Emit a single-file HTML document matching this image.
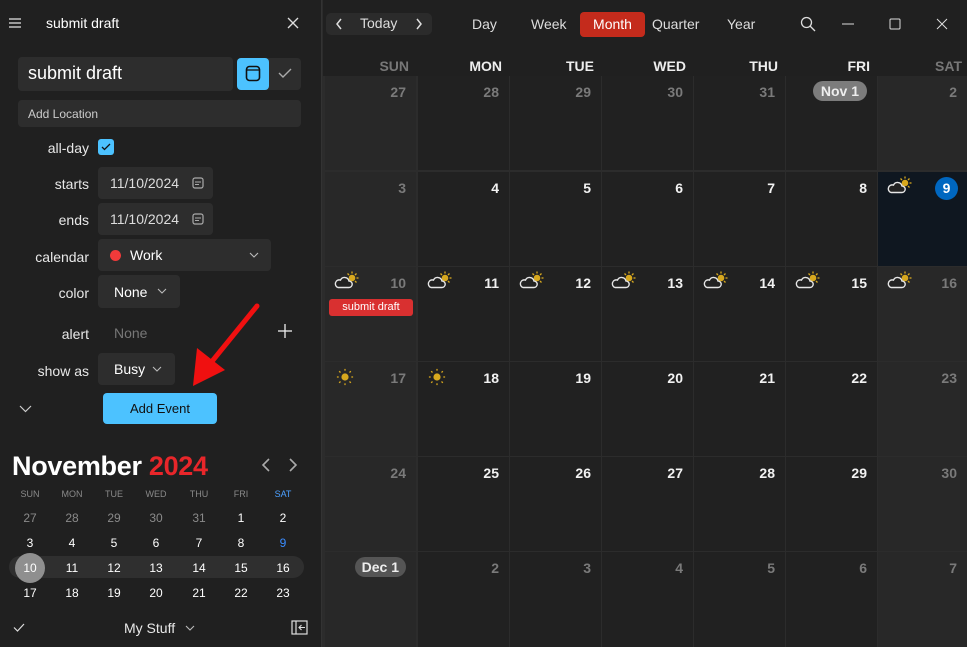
<!DOCTYPE html>
<html><head><meta charset="utf-8"><style>
*{box-sizing:border-box;margin:0;padding:0}
body{width:967px;height:647px;overflow:hidden;background:#2c2c2c;font-family:"Liberation Sans",sans-serif;color:#fff;position:relative}
.a{position:absolute}
#side{left:0;top:0;width:322px;height:647px;background:#202020;border-right:1px solid #333}
.box{position:absolute;background:#2d2d2d;border-radius:4px}
.lbl{position:absolute;width:89px;text-align:right;font-size:14px;color:#e8e8e8}
.mc{position:absolute;width:30px;text-align:center;font-size:12px;color:#fff}
.g{color:#8a8a8a}
.c{position:absolute;width:91px;height:94px;background:#212121}
.w{background:#282828}
.n{position:absolute;right:10px;top:8px;font-size:14px;font-weight:bold;color:#f2f2f2}
.w .n,.o .n{color:#7a7a7a}
.hd{position:absolute;top:58px;font-size:14px;font-weight:bold;text-align:right;width:84px;color:#eee}
.ic{position:absolute;left:9px;top:4px;width:26px;height:20px}
.tb{position:absolute;top:16px;font-size:14px;color:#ddd}
</style></head><body>
<svg width="0" height="0" style="position:absolute"><defs>
<symbol id="cs" viewBox="0 0 26 20"><g stroke="#d7a81e" stroke-width="1.3"><line x1="18" y1="0.5" x2="18" y2="2.5"/><line x1="24.5" y1="7" x2="22.5" y2="7"/><line x1="22.5" y1="2.5" x2="21" y2="4"/><line x1="13.5" y1="2.5" x2="15" y2="4"/><line x1="22.5" y1="11.5" x2="21" y2="10"/></g><circle cx="18" cy="7" r="3.3" fill="#d7a81e"/><path d="M4 16.5h11a3.2 3.2 0 0 0 0-6.4 4.5 4.5 0 0 0-8.5-1A3.8 3.8 0 0 0 4 16.5z" fill="#222" stroke="#e6e6e6" stroke-width="1.4"/></symbol>
<symbol id="sun" viewBox="0 0 20 20"><circle cx="10" cy="10" r="4" fill="#d7a81e"/><g stroke="#d7a81e" stroke-width="1.4"><line x1="10" y1="1" x2="10" y2="3"/><line x1="10" y1="17" x2="10" y2="19"/><line x1="1" y1="10" x2="3" y2="10"/><line x1="17" y1="10" x2="19" y2="10"/><line x1="3.5" y1="3.5" x2="5" y2="5"/><line x1="15" y1="15" x2="16.5" y2="16.5"/><line x1="3.5" y1="16.5" x2="5" y2="15"/><line x1="15" y1="5" x2="16.5" y2="3.5"/></g></symbol>
</defs></svg>

<div id="side" class="a">
 <svg class="a" style="left:8px;top:16px" width="14" height="14"><g stroke="#ddd" stroke-width="1.3"><line x1="1" y1="3" x2="13" y2="3"/><line x1="1" y1="7" x2="13" y2="7"/><line x1="1" y1="11" x2="13" y2="11"/></g></svg>
 <div class="a" style="left:46px;top:15px;font-size:14px">submit draft</div>
 <svg class="a" style="left:287px;top:17px" width="12" height="12"><g stroke="#ddd" stroke-width="1.3"><line x1="1" y1="1" x2="11" y2="11"/><line x1="11" y1="1" x2="1" y2="11"/></g></svg>
 <div class="box" style="left:18px;top:57px;width:215px;height:34px"></div>
 <div class="a" style="left:28px;top:63px;font-size:18px">submit draft</div>
 <div class="box" style="left:237px;top:58px;width:64px;height:32px"></div>
 <div class="a" style="left:237px;top:58px;width:32px;height:32px;background:#4cc2ff;border-radius:4px"></div>
 <svg class="a" style="left:245px;top:65px" width="16" height="17"><rect x="1.5" y="1.5" width="13" height="14" rx="3" fill="none" stroke="#111" stroke-width="1.6"/><line x1="2" y1="5" x2="14" y2="5" stroke="#111" stroke-width="1.3"/></svg>
 <svg class="a" style="left:278px;top:67px" width="14" height="12"><path d="M1 6l4 4 8-8" fill="none" stroke="#aaa" stroke-width="1.4"/></svg>
 <div class="box" style="left:18px;top:100px;width:283px;height:27px"></div>
 <div class="a" style="left:28px;top:107px;font-size:12px;color:#ccc">Add Location</div>
 <div class="lbl" style="left:0;top:140px">all-day</div>
 <div class="a" style="left:98px;top:139px;width:16px;height:16px;background:#4cc2ff;border-radius:3px"></div>
 <svg class="a" style="left:101px;top:143px" width="10" height="8"><path d="M1 4l2.5 2.5L9 1" fill="none" stroke="#111" stroke-width="1.3"/></svg>
 <div class="lbl" style="left:0;top:176px">starts</div>
 <div class="box" style="left:98px;top:167px;width:115px;height:32px"></div>
 <div class="a" style="left:110px;top:175px;font-size:14px;color:#ddd">11/10/2024</div>
 <svg class="a" style="left:192px;top:177px" width="12" height="12"><rect x="1" y="1" width="10" height="10" rx="2" fill="none" stroke="#aaa" stroke-width="1.2"/><line x1="3" y1="5" x2="9" y2="5" stroke="#aaa"/><line x1="3" y1="7.5" x2="7" y2="7.5" stroke="#aaa"/></svg>
 <div class="lbl" style="left:0;top:212px">ends</div>
 <div class="box" style="left:98px;top:203px;width:115px;height:32px"></div>
 <div class="a" style="left:110px;top:211px;font-size:14px;color:#ddd">11/10/2024</div>
 <svg class="a" style="left:192px;top:213px" width="12" height="12"><rect x="1" y="1" width="10" height="10" rx="2" fill="none" stroke="#aaa" stroke-width="1.2"/><line x1="3" y1="5" x2="9" y2="5" stroke="#aaa"/><line x1="3" y1="7.5" x2="7" y2="7.5" stroke="#aaa"/></svg>
 <div class="lbl" style="left:0;top:249px">calendar</div>
 <div class="box" style="left:98px;top:239px;width:173px;height:32px"></div>
 <div class="a" style="left:110px;top:250px;width:11px;height:11px;border-radius:50%;background:#f03a3a"></div>
 <div class="a" style="left:130px;top:247px;font-size:14px">Work</div>
 <svg class="a" style="left:249px;top:252px" width="10" height="6"><path d="M1 1l4 4 4-4" fill="none" stroke="#bbb" stroke-width="1.1"/></svg>
 <div class="lbl" style="left:0;top:285px">color</div>
 <div class="box" style="left:98px;top:275px;width:82px;height:33px"></div>
 <div class="a" style="left:114px;top:284px;font-size:14px">None</div>
 <svg class="a" style="left:157px;top:288px" width="10" height="6"><path d="M1 1l4 4 4-4" fill="none" stroke="#bbb" stroke-width="1.1"/></svg>
 <div class="lbl" style="left:0;top:326px">alert</div>
 <div class="a" style="left:114px;top:325px;font-size:14px;color:#777">None</div>
 <svg class="a" style="left:278px;top:324px" width="14" height="14"><g stroke="#eee" stroke-width="1.3"><line x1="7" y1="0" x2="7" y2="14"/><line x1="0" y1="7" x2="14" y2="7"/></g></svg>
 <div class="lbl" style="left:0;top:363px">show as</div>
 <div class="box" style="left:98px;top:353px;width:77px;height:32px"></div>
 <div class="a" style="left:114px;top:361px;font-size:14px">Busy</div>
 <svg class="a" style="left:152px;top:366px" width="10" height="6"><path d="M1 1l4 4 4-4" fill="none" stroke="#bbb" stroke-width="1.1"/></svg>
 <svg class="a" style="left:19px;top:405px" width="13" height="8"><path d="M1 1l5.5 5.5L12 1" fill="none" stroke="#ccc" stroke-width="1.2"/></svg>
 <div class="a" style="left:103px;top:393px;width:114px;height:31px;background:#4cc2ff;border-radius:4px;color:#111;font-size:13px;text-align:center;line-height:31px">Add Event</div>
 <svg class="a" style="left:185px;top:300px" width="80" height="95"><line x1="72" y1="6" x2="20" y2="70" stroke="#f01010" stroke-width="5" stroke-linecap="round"/><polygon points="8,86 12,48 40,70" fill="#f01010"/></svg>

 <div class="a" style="left:12px;top:451px;font-size:27px;font-weight:bold;letter-spacing:-0.3px">November <span style="color:#e8262a">2024</span></div>
 <svg class="a" style="left:260px;top:458px" width="40" height="14"><path d="M9 1L3 7l6 6" fill="none" stroke="#aaa" stroke-width="1.6"/><path d="M30 1l6 6-6 6" fill="none" stroke="#aaa" stroke-width="1.6"/></svg>
 <div class="mc g" style="left:15px;top:489px;font-size:9px">SUN</div><div class="mc g" style="left:57px;top:489px;font-size:9px">MON</div><div class="mc g" style="left:99px;top:489px;font-size:9px">TUE</div><div class="mc g" style="left:141px;top:489px;font-size:9px">WED</div><div class="mc g" style="left:184px;top:489px;font-size:9px">THU</div><div class="mc g" style="left:226px;top:489px;font-size:9px">FRI</div><div class="mc" style="left:268px;top:489px;font-size:9px;color:#4ca0ff">SAT</div>
 <div class="mc g" style="left:15px;top:511px">27</div><div class="mc g" style="left:57px;top:511px">28</div><div class="mc g" style="left:99px;top:511px">29</div><div class="mc g" style="left:141px;top:511px">30</div><div class="mc g" style="left:184px;top:511px">31</div><div class="mc" style="left:226px;top:511px">1</div><div class="mc" style="left:268px;top:511px">2</div>
 <div class="mc" style="left:15px;top:536px">3</div><div class="mc" style="left:57px;top:536px">4</div><div class="mc" style="left:99px;top:536px">5</div><div class="mc" style="left:141px;top:536px">6</div><div class="mc" style="left:184px;top:536px">7</div><div class="mc" style="left:226px;top:536px">8</div><div class="mc" style="left:268px;top:536px;color:#3a8cff">9</div>
 <div class="a" style="left:9px;top:556px;width:295px;height:22px;background:#2f2f2f;border-radius:11px"></div>
 <div class="a" style="left:15px;top:553px;width:30px;height:30px;background:#8f8f8f;border-radius:50%"></div>
 <div class="mc" style="left:15px;top:561px">10</div><div class="mc" style="left:57px;top:561px">11</div><div class="mc" style="left:99px;top:561px">12</div><div class="mc" style="left:141px;top:561px">13</div><div class="mc" style="left:184px;top:561px">14</div><div class="mc" style="left:226px;top:561px">15</div><div class="mc" style="left:268px;top:561px">16</div>
 <div class="mc" style="left:15px;top:586px">17</div><div class="mc" style="left:57px;top:586px">18</div><div class="mc" style="left:99px;top:586px">19</div><div class="mc" style="left:141px;top:586px">20</div><div class="mc" style="left:184px;top:586px">21</div><div class="mc" style="left:226px;top:586px">22</div><div class="mc" style="left:268px;top:586px">23</div>
 <svg class="a" style="left:13px;top:623px" width="12" height="9"><path d="M1 4.5l3.5 3.5L11 1" fill="none" stroke="#ddd" stroke-width="1.2"/></svg>
 <div class="a" style="left:124px;top:620px;font-size:14px;color:#e8e8e8">My Stuff</div>
 <svg class="a" style="left:185px;top:625px" width="10" height="6"><path d="M1 1l4 4 4-4" fill="none" stroke="#bbb" stroke-width="1.1"/></svg>
 <svg class="a" style="left:291px;top:620px" width="17" height="15"><rect x="1" y="1" width="15" height="13" fill="none" stroke="#ddd" stroke-width="1.2"/><line x1="5" y1="1" x2="5" y2="14" stroke="#ddd" stroke-width="1.2"/><path d="M14 7.5H8m2.5-2.5L8 7.5l2.5 2.5" fill="none" stroke="#ddd" stroke-width="1.1"/></svg>
</div>

<div class="a" style="left:323px;top:0;width:644px;height:76px;background:#202020"></div>
<div class="a" style="left:326px;top:13px;width:106px;height:22px;background:#2b2b2b;border-radius:5px"></div>
<svg class="a" style="left:334px;top:17px" width="90" height="14"><path d="M7 2L3 7l4 5" fill="none" stroke="#ddd" stroke-width="1.5"/><path d="M83 2l4 5-4 5" fill="none" stroke="#ddd" stroke-width="1.5"/></svg>
<div class="tb" style="left:360px;top:15px">Today</div>
<div class="tb" style="left:472px">Day</div>
<div class="tb" style="left:531px">Week</div>
<div class="a" style="left:580px;top:12px;width:65px;height:25px;background:#c42b1c;border-radius:4px;font-size:14px;line-height:25px;text-align:center">Month</div>
<div class="tb" style="left:652px">Quarter</div>
<div class="tb" style="left:727px">Year</div>
<svg class="a" style="left:800px;top:16px" width="16" height="16"><circle cx="6.5" cy="6.5" r="5" fill="none" stroke="#ddd" stroke-width="1.3"/><line x1="10" y1="10" x2="15" y2="15" stroke="#ddd" stroke-width="1.3"/></svg>
<svg class="a" style="left:842px;top:23px" width="12" height="2"><line x1="0" y1="1" x2="12" y2="1" stroke="#ddd"/></svg>
<svg class="a" style="left:889px;top:18px" width="12" height="12"><rect x="1" y="1" width="10" height="10" rx="1" fill="none" stroke="#ddd"/></svg>
<svg class="a" style="left:936px;top:18px" width="12" height="12"><path d="M1 1l10 10M11 1L1 11" stroke="#ddd"/></svg>

<div class="hd" style="left:325px;color:#777">SUN</div>
<div class="hd" style="left:418px">MON</div>
<div class="hd" style="left:510px">TUE</div>
<div class="hd" style="left:602px">WED</div>
<div class="hd" style="left:694px">THU</div>
<div class="hd" style="left:786px">FRI</div>
<div class="hd" style="left:878px;color:#777">SAT</div>

<div class="c w o" style="left:325px;top:76px"><div class="n">27</div></div>
<div class="c o" style="left:418px;top:76px"><div class="n">28</div></div>
<div class="c o" style="left:510px;top:76px"><div class="n">29</div></div>
<div class="c o" style="left:602px;top:76px"><div class="n">30</div></div>
<div class="c o" style="left:694px;top:76px"><div class="n">31</div></div>
<div class="c" style="left:786px;top:76px"><div class="n" style="top:5px;background:#7c7c7c;border-radius:10px;padding:2px 8px;color:#eee">Nov 1</div></div>
<div class="c w" style="left:878px;top:76px;width:89px"><div class="n">2</div></div>

<div class="c w" style="left:325px;top:172px"><div class="n">3</div></div>
<div class="c" style="left:418px;top:172px"><div class="n">4</div></div>
<div class="c" style="left:510px;top:172px"><div class="n">5</div></div>
<div class="c" style="left:602px;top:172px"><div class="n">6</div></div>
<div class="c" style="left:694px;top:172px"><div class="n">7</div></div>
<div class="c" style="left:786px;top:172px"><div class="n">8</div></div>
<div class="c" style="left:878px;top:172px;width:89px;background:#0f1720"><svg class="ic"><use href="#cs"/></svg><div class="n" style="top:5px;right:9px;width:23px;height:23px;border-radius:50%;background:#0067c0;color:#fff;text-align:center;line-height:23px">9</div></div>

<div class="c w" style="left:325px;top:267px"><svg class="ic"><use href="#cs"/></svg><div class="n">10</div><div class="a" style="left:4px;top:32px;width:84px;height:17px;background:#d93030;border-radius:3px;font-size:11px;line-height:17px;text-align:center">submit draft</div></div>
<div class="c" style="left:418px;top:267px"><svg class="ic"><use href="#cs"/></svg><div class="n">11</div></div>
<div class="c" style="left:510px;top:267px"><svg class="ic"><use href="#cs"/></svg><div class="n">12</div></div>
<div class="c" style="left:602px;top:267px"><svg class="ic"><use href="#cs"/></svg><div class="n">13</div></div>
<div class="c" style="left:694px;top:267px"><svg class="ic"><use href="#cs"/></svg><div class="n">14</div></div>
<div class="c" style="left:786px;top:267px"><svg class="ic"><use href="#cs"/></svg><div class="n">15</div></div>
<div class="c w" style="left:878px;top:267px;width:89px"><svg class="ic"><use href="#cs"/></svg><div class="n">16</div></div>

<div class="c w" style="left:325px;top:362px"><svg class="ic" style="width:18px;height:18px;left:11px;top:6px"><use href="#sun"/></svg><div class="n">17</div></div>
<div class="c" style="left:418px;top:362px"><svg class="ic" style="width:18px;height:18px;left:10px;top:6px"><use href="#sun"/></svg><div class="n">18</div></div>
<div class="c" style="left:510px;top:362px"><div class="n">19</div></div>
<div class="c" style="left:602px;top:362px"><div class="n">20</div></div>
<div class="c" style="left:694px;top:362px"><div class="n">21</div></div>
<div class="c" style="left:786px;top:362px"><div class="n">22</div></div>
<div class="c w" style="left:878px;top:362px;width:89px"><div class="n">23</div></div>

<div class="c w" style="left:325px;top:457px"><div class="n">24</div></div>
<div class="c" style="left:418px;top:457px"><div class="n">25</div></div>
<div class="c" style="left:510px;top:457px"><div class="n">26</div></div>
<div class="c" style="left:602px;top:457px"><div class="n">27</div></div>
<div class="c" style="left:694px;top:457px"><div class="n">28</div></div>
<div class="c" style="left:786px;top:457px"><div class="n">29</div></div>
<div class="c w" style="left:878px;top:457px;width:89px"><div class="n">30</div></div>

<div class="c w" style="left:325px;top:552px;height:95px"><div class="n" style="top:5px;background:#555;border-radius:10px;padding:2px 7px;color:#eee">Dec 1</div></div>
<div class="c o" style="left:418px;top:552px;height:95px"><div class="n">2</div></div>
<div class="c o" style="left:510px;top:552px;height:95px"><div class="n">3</div></div>
<div class="c o" style="left:602px;top:552px;height:95px"><div class="n">4</div></div>
<div class="c o" style="left:694px;top:552px;height:95px"><div class="n">5</div></div>
<div class="c o" style="left:786px;top:552px;height:95px"><div class="n">6</div></div>
<div class="c w" style="left:878px;top:552px;width:89px;height:95px"><div class="n">7</div></div>
</body></html>
